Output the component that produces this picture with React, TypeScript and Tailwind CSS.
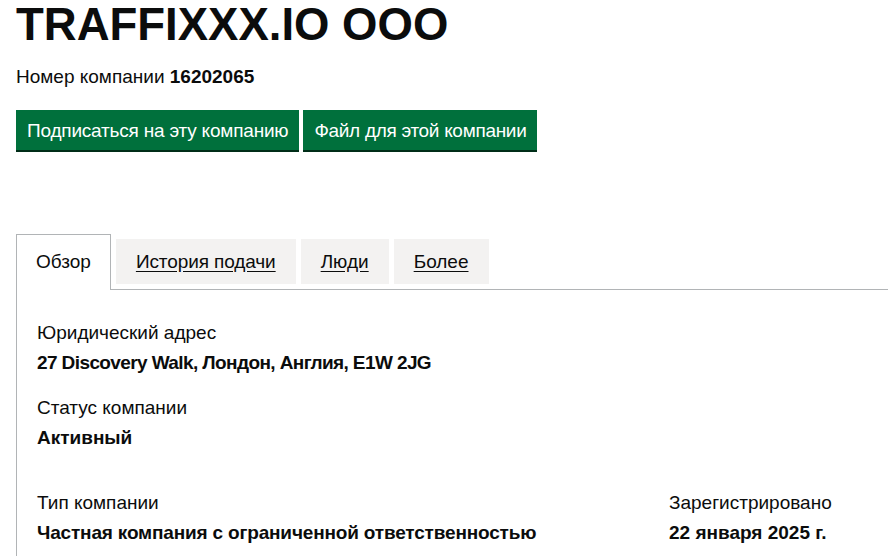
import React from "react";

export default function App() {
  return (
    <div className="w-[888px] h-[556px] overflow-hidden bg-white text-[#0b0c0c] font-['Liberation_Sans',Arial,sans-serif] pl-4">
      <h1 className="text-[45.5px] leading-[50px] font-bold tracking-[0px]">TRAFFIXXX.IO OOO</h1>
      <p className="mt-[14px] text-[19px] leading-[25px]">
        Номер компании <strong className="font-bold">16202065</strong>
      </p>
      <div className="mt-[21px] flex gap-[4px]">
        <button className="bg-[#00703c] text-white text-[19px] leading-[25px] tracking-[-0.2px] pt-[8px] pb-[7px] px-[11px] shadow-[0_2px_0_#002d18]">
          Подписаться на эту компанию
        </button>
        <button className="bg-[#00703c] text-white text-[19px] leading-[25px] tracking-[-0.3px] pt-[8px] pb-[7px] px-[11px] shadow-[0_2px_0_#002d18]">
          Файл для этой компании
        </button>
      </div>
      <div className="mt-[84px] flex items-end border-b border-[#b1b4b6] w-[900px]">
        <div className="mb-[-1px] border border-b-0 border-[#b1b4b6] bg-white px-[19px] pt-[14px] pb-[16px] text-[19px] leading-[25px] mr-[5px]">
          Обзор
        </div>
        <a className="mb-[5px] bg-[#f3f2f1] px-[20px] py-[10px] text-[19px] leading-[25px] tracking-[-0.1px] underline underline-offset-[3px] mr-[5px]">
          История подачи
        </a>
        <a className="mb-[5px] bg-[#f3f2f1] px-[20px] py-[10px] text-[19px] leading-[25px] underline underline-offset-[3px] mr-[5px]">
          Люди
        </a>
        <a className="mb-[5px] bg-[#f3f2f1] px-[20px] py-[10px] text-[19px] leading-[25px] underline underline-offset-[3px]">
          Более
        </a>
      </div>
      <div className="border-l border-[#b1b4b6] px-[20px] pt-[30px] h-[400px] text-[19px] leading-[25px]">
        <dl>
          <dt>Юридический адрес</dt>
          <dd className="mt-[5px] font-bold tracking-[-0.6px]">27 Discovery Walk, Лондон, Англия, E1W 2JG</dd>
          <dt className="mt-[20px]">Статус компании</dt>
          <dd className="mt-[5px] font-bold">Активный</dd>
        </dl>
        <div className="mt-[40px] flex">
          <dl className="w-[632px]">
            <dt>Тип компании</dt>
            <dd className="mt-[5px] font-bold tracking-[-0.17px]">Частная компания с ограниченной ответственностью</dd>
          </dl>
          <dl>
            <dt>Зарегистрировано</dt>
            <dd className="mt-[5px] font-bold">22 января 2025 г.</dd>
          </dl>
        </div>
      </div>
    </div>
  );
}
